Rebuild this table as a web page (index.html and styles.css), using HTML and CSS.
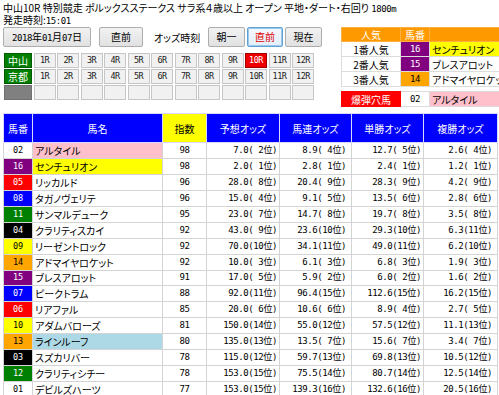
FILE: index.html
```html
<!DOCTYPE html>
<html lang="ja">
<head>
<meta charset="utf-8">
<title>オッズ</title>
<link rel="stylesheet" href="styles.css">
</head>
<body>
<div class="title">中山10R 特別競走 ポルックスステークス サラ系４歳以上 オープン 平地・ダート・右回り <span class="num">1800m</span></div>
<div class="time">発走時刻:<span class="num">15:01</span></div>
<div class="top">
  <div class="left">
    <div class="toolbar">
      <button class="btn btn-date"><span class="num">2018</span>年<span class="num">01</span>月<span class="num">07</span>日</button>
      <button class="btn btn-prev">直前</button>
      <span class="label">オッズ時刻</span>
      <button class="btn btn-s">朝一</button>
      <button class="btn btn-s active">直前</button>
      <button class="btn btn-s">現在</button>
    </div>
    <div class="races">
      <div class="venue">中山</div>
      <div class="rc">1R</div><div class="rc">2R</div><div class="rc">3R</div><div class="rc">4R</div><div class="rc">5R</div><div class="rc">6R</div><div class="rc">7R</div><div class="rc">8R</div><div class="rc">9R</div><div class="rc sel">10R</div><div class="rc">11R</div><div class="rc">12R</div>
      <div class="venue">京都</div>
      <div class="rc">1R</div><div class="rc">2R</div><div class="rc">3R</div><div class="rc">4R</div><div class="rc">5R</div><div class="rc">6R</div><div class="rc">7R</div><div class="rc">8R</div><div class="rc">9R</div><div class="rc">10R</div><div class="rc">11R</div><div class="rc">12R</div>
      <div class="venue empty"></div>
      <div class="rc"></div><div class="rc"></div><div class="rc"></div><div class="rc"></div><div class="rc"></div><div class="rc"></div><div class="rc"></div><div class="rc"></div><div class="rc"></div><div class="rc"></div><div class="rc"></div><div class="rc"></div>
    </div>
  </div>
  <div class="right">
    <table class="pop">
      <tr class="pop-head"><th class="c-rank">人気</th><th class="c-no">馬番</th><th class="c-name"></th></tr>
      <tr><td class="c-rank">1番人気</td><td class="c-no w8 num">16</td><td class="c-name hl-yellow">センチュリオン</td></tr>
      <tr><td class="c-rank">2番人気</td><td class="c-no w8 num">15</td><td class="c-name">ブレスアロット</td></tr>
      <tr><td class="c-rank">3番人気</td><td class="c-no w7 num">14</td><td class="c-name">アドマイヤロケット</td></tr>
    </table>
    <table class="pop bomb">
      <tr><td class="c-rank bomb-label">爆弾穴馬</td><td class="c-no num">02</td><td class="c-name hl-pink">アルタイル</td></tr>
    </table>
  </div>
</div>
<table class="main">
  <colgroup>
    <col class="col-no"><col class="col-name"><col class="col-idx"><col class="col-o1"><col class="col-o2"><col class="col-o3"><col class="col-o4">
  </colgroup>
  <thead>
    <tr><th>馬番</th><th>馬名</th><th class="th-idx">指数</th><th>予想オッズ</th><th>馬連オッズ</th><th>単勝オッズ</th><th>複勝オッズ</th></tr>
  </thead>
  <tbody>
    <tr><td class="no w1">02</td><td class="name hl-pink">アルタイル</td><td class="idx">98</td><td class="od o1">7.0( 2位)</td><td class="od o2">8.9( 4位)</td><td class="od o3">12.7( 5位)</td><td class="od o4">2.6( 4位)</td></tr>
    <tr><td class="no w8">16</td><td class="name hl-yellow">センチュリオン</td><td class="idx">98</td><td class="od o1">2.0( 1位)</td><td class="od o2">2.8( 1位)</td><td class="od o3">2.4( 1位)</td><td class="od o4">1.2( 1位)</td></tr>
    <tr><td class="no w3">05</td><td class="name">リッカルド</td><td class="idx">96</td><td class="od o1">28.0( 8位)</td><td class="od o2">20.4( 9位)</td><td class="od o3">28.3( 9位)</td><td class="od o4">4.2( 9位)</td></tr>
    <tr><td class="no w4">08</td><td class="name">タガノヴェリテ</td><td class="idx">96</td><td class="od o1">15.0( 4位)</td><td class="od o2">9.1( 5位)</td><td class="od o3">13.5( 6位)</td><td class="od o4">2.8( 6位)</td></tr>
    <tr><td class="no w6">11</td><td class="name">サンマルデューク</td><td class="idx">95</td><td class="od o1">23.0( 7位)</td><td class="od o2">14.7( 8位)</td><td class="od o3">19.7( 8位)</td><td class="od o4">3.5( 8位)</td></tr>
    <tr><td class="no w2">04</td><td class="name">クラリティスカイ</td><td class="idx">92</td><td class="od o1">43.0( 9位)</td><td class="od o2">23.6(10位)</td><td class="od o3">29.3(10位)</td><td class="od o4">6.3(11位)</td></tr>
    <tr><td class="no w5">09</td><td class="name">リーゼントロック</td><td class="idx">92</td><td class="od o1">70.0(10位)</td><td class="od o2">34.1(11位)</td><td class="od o3">49.0(11位)</td><td class="od o4">6.2(10位)</td></tr>
    <tr><td class="no w7">14</td><td class="name">アドマイヤロケット</td><td class="idx">92</td><td class="od o1">10.0( 3位)</td><td class="od o2">6.1( 3位)</td><td class="od o3">6.8( 3位)</td><td class="od o4">1.9( 3位)</td></tr>
    <tr><td class="no w8">15</td><td class="name">ブレスアロット</td><td class="idx">91</td><td class="od o1">17.0( 5位)</td><td class="od o2">5.9( 2位)</td><td class="od o3">6.0( 2位)</td><td class="od o4">1.6( 2位)</td></tr>
    <tr><td class="no w4">07</td><td class="name">ピークトラム</td><td class="idx">88</td><td class="od o1">92.0(11位)</td><td class="od o2">96.4(15位)</td><td class="od o3">112.6(15位)</td><td class="od o4">16.2(15位)</td></tr>
    <tr><td class="no w3">06</td><td class="name">リアファル</td><td class="idx">85</td><td class="od o1">20.0( 6位)</td><td class="od o2">10.6( 6位)</td><td class="od o3">8.9( 4位)</td><td class="od o4">2.7( 5位)</td></tr>
    <tr><td class="no w5">10</td><td class="name">アダムバローズ</td><td class="idx">81</td><td class="od o1">150.0(14位)</td><td class="od o2">55.0(12位)</td><td class="od o3">57.5(12位)</td><td class="od o4">11.1(13位)</td></tr>
    <tr><td class="no w7">13</td><td class="name hl-blue">ラインルーフ</td><td class="idx">80</td><td class="od o1">135.0(13位)</td><td class="od o2">13.5( 7位)</td><td class="od o3">15.6( 7位)</td><td class="od o4">3.4( 7位)</td></tr>
    <tr><td class="no w2">03</td><td class="name">スズカリバー</td><td class="idx">78</td><td class="od o1">115.0(12位)</td><td class="od o2">59.7(13位)</td><td class="od o3">69.8(13位)</td><td class="od o4">10.5(12位)</td></tr>
    <tr><td class="no w6">12</td><td class="name">クラリティシチー</td><td class="idx">78</td><td class="od o1">153.0(15位)</td><td class="od o2">75.5(14位)</td><td class="od o3">80.7(14位)</td><td class="od o4">12.5(14位)</td></tr>
    <tr><td class="no w1">01</td><td class="name">デビルズハーツ</td><td class="idx">77</td><td class="od o1">153.0(15位)</td><td class="od o2">139.3(16位)</td><td class="od o3">132.6(16位)</td><td class="od o4">20.5(16位)</td></tr>
  </tbody>
</table>
</body>
</html>
```

FILE: styles.css
```css
html, body {
  overflow: hidden;
}
body {
  margin: 0;
  padding: 0 0 0 3px;
  background: #fff;
  color: #000;
  font-family: "Noto Sans CJK JP", sans-serif;
  font-size: 10px;
  font-feature-settings: "palt";
}
.num {
  font-family: "DejaVu Sans Mono", "Noto Sans CJK JP", monospace;
  font-size: 9px;
  letter-spacing: -0.4px;
}
.title {
  margin-top: 1px;
  height: 13px;
  line-height: 13px;
  white-space: nowrap;
}
.time {
  height: 12px;
  line-height: 12px;
  white-space: nowrap;
}
.top {
  display: flex;
  align-items: flex-start;
  margin-top: 1px;
}
.left {
  width: 338px;
  flex: none;
}
.right {
  width: 200px;
  flex: none;
}
.toolbar {
  display: flex;
  align-items: center;
  height: 20px;
}
.btn {
  box-sizing: border-box;
  height: 20px;
  margin: 0;
  padding: 0;
  border: 1px solid #adadad;
  border-radius: 2px;
  background: linear-gradient(#f2f2f2, #e1e1e1);
  color: #000;
  font-family: "Noto Sans CJK JP", sans-serif;
  font-size: 10px;
  font-feature-settings: "palt";
  line-height: 18px;
}
.btn-date { width: 88px; }
.btn-prev { width: 44px; margin-left: 8px; }
.label { margin-left: 11px; width: 54px; }
.btn-s { width: 37px; margin-right: 2px; }
.btn-s.active {
  width: 36px;
  color: #e00000;
  border-color: #5fa3d6;
  box-shadow: inset 0 0 0 1px #9cc8ea;
  background: linear-gradient(#f4f9fd, #e3eef8);
}
.races {
  display: grid;
  grid-template-columns: 28px repeat(12, 22px);
  grid-auto-rows: 15px;
  column-gap: 1.5px;
  row-gap: 1px;
  margin: 6px 0 0 1px;
}
.rc {
  box-sizing: border-box;
  border: 1px solid #c6c6c6;
  background: #f1f1f1;
  text-align: center;
  line-height: 13px;
  font-family: "DejaVu Sans Mono", monospace;
  font-size: 8.5px;
  letter-spacing: -0.5px;
  color: #222;
}
.rc.sel {
  background: #ee0000;
  border-color: #a00000;
  color: #fff;
}
.venue {
  box-sizing: border-box;
  background: #007f00;
  border: 1px solid #005a00;
  color: #fff;
  text-align: center;
  line-height: 13px;
  font-size: 10px;
}
.venue.empty {
  background: #808080;
  border-color: #707070;
}
.pop {
  border-collapse: collapse;
  table-layout: fixed;
  width: 200px;
}
.pop th, .pop td {
  padding: 0;
  height: 14px;
  border: 1px solid #dcdcdc;
  font-weight: normal;
  white-space: nowrap;
  overflow: hidden;
  line-height: 13px;
}
.pop-head th {
  background: #ff9900;
  color: #fff;
  border-color: #ffb040;
  height: 13px;
}
.pop .c-rank { width: 58px; text-align: center; }
.pop .c-no { width: 28px; text-align: center; }
.pop .c-name { text-align: left; padding-left: 2px; }
.bomb { margin-top: 4px; }
.bomb td { height: 14px; }
.bomb .bomb-label {
  background: #ff0000;
  color: #fff;
  border-color: #ff0000;
}
.main {
  margin-top: 6px;
  width: 494px;
  table-layout: fixed;
  border-collapse: collapse;
  border: 1px solid #cfcfcf;
}
.col-no { width: 29px; }
.col-name { width: 130px; }
.col-idx { width: 44px; }
.col-o1 { width: 73px; }
.col-o2 { width: 72px; }
.col-o3 { width: 72px; }
.col-o4 { width: 74px; }
.main th {
  height: 28px;
  padding: 0;
  background: #0000ff;
  color: #fff;
  font-weight: normal;
  border: 1px solid #d8d8ff;
  font-size: 10px;
}
.main th.th-idx {
  background: #ffff00;
  color: #000;
}
.main td {
  height: 14.95px;
  padding: 0;
  border: 1px solid #d4d4d4;
  line-height: 13px;
  white-space: pre;
  overflow: hidden;
}
.main td.no {
  text-align: center;
  font-family: "DejaVu Sans Mono", monospace;
  font-size: 8.5px;
}
.main td.name {
  padding-left: 2px;
}
.main td.idx {
  text-align: center;
  font-family: "DejaVu Sans Mono", monospace;
  font-size: 9px;
  letter-spacing: -0.4px;
}
.main td.od {
  text-align: right;
  font-family: "DejaVu Sans Mono", "Noto Sans CJK JP", monospace;
  font-size: 9px;
  letter-spacing: -0.4px;
}
.o1 { padding-right: 2px !important; }
.o2 { padding-right: 5px !important; }
.o3 { padding-right: 2px !important; }
.o4 { padding-right: 5px !important; }
.w1 { background: #fff; color: #000; }
.w2 { background: #000; color: #fff; }
.w3 { background: #ff0000; color: #fff; }
.w4 { background: #0000ff; color: #fff; }
.w5 { background: #ffff00; color: #000; }
.w6 { background: #008000; color: #fff; }
.w7 { background: #ffa500; color: #000; }
.w8 { background: #800080; color: #fff; }
.hl-pink { background: #ffc0cb; }
.hl-yellow { background: #ffff00; }
.hl-blue { background: #add8e6; }
```
